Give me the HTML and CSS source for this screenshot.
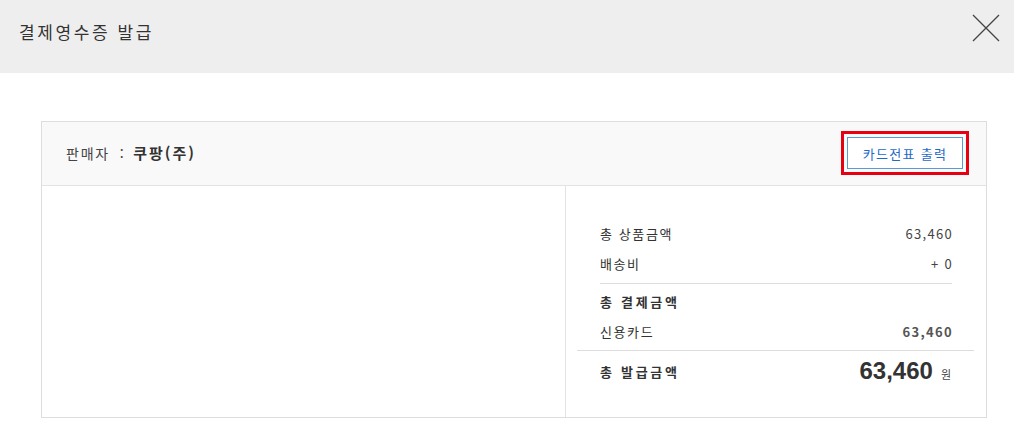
FILE: index.html
```html
<!DOCTYPE html>
<html lang="ko">
<head>
<meta charset="utf-8">
<title>결제영수증 발급</title>
<link rel="stylesheet" href="styles.css">
</head>
<body>
<header class="top">
  <h1 class="title">결제영수증 발급</h1>
  <button class="close" aria-label="닫기">
    <svg width="28" height="28" viewBox="0 0 28 28"><path d="M1 1 L27 27 M27 1 L1 27" stroke="#444" stroke-width="1.3" fill="none"/></svg>
  </button>
</header>
<main class="content">
  <section class="card">
    <div class="card-head">
      <div class="seller">판매자 <span class="colon">:</span> <b>쿠팡(주)</b></div>
      <div class="highlight"><button class="print">카드전표 출력</button></div>
    </div>
    <div class="card-body">
      <div class="left"></div>
      <div class="right">
        <div class="group first">
          <div class="row"><span>총 상품금액</span><span class="num">63,460</span></div>
          <div class="row"><span>배송비</span><span class="num">+ 0</span></div>
        </div>
        <div class="group second">
          <div class="row"><span class="strong">총 결제금액</span></div>
          <div class="row"><span>신용카드</span><span class="num bold">63,460</span></div>
        </div>
        <div class="total">
          <span class="strong">총 발급금액</span>
          <span class="amount"><span class="big">63,460</span> <span class="won">원</span></span>
        </div>
      </div>
    </div>
  </section>
</main>
</body>
</html>
```
FILE: styles.css
```css
* { box-sizing: border-box; }
body {
  margin: 0;
  background: #fff;
  font-family: "Noto Sans CJK KR", "Noto Sans", sans-serif;
  color: #333;
}
.top {
  height: 73px;
  background: #eeeeee;
  display: flex;
  align-items: center;
  justify-content: space-between;
  padding: 0 14px 0 19px;
}
.title {
  margin: 0;
  font-size: 17px;
  font-weight: 400;
  color: #333;
  letter-spacing: 2.6px;
  padding-bottom: 10px;
}
.close {
  border: 0;
  background: none;
  padding: 0;
  width: 28px;
  height: 28px;
  display: block;
  margin-bottom: 18px;
}
.close svg { display: block; }
.content {
  padding: 48px 27px 0 41px;
}
.card {
  width: 946px;
  border: 1px solid #dddddd;
}
.card-head {
  height: 64px;
  background: #f9f9f9;
  border-bottom: 1px solid #e3e3e3;
  display: flex;
  align-items: center;
  justify-content: space-between;
  padding: 0 17px 0 24px;
}
.seller {
  font-size: 14px;
  color: #444;
  letter-spacing: 1.8px;
  padding-bottom: 2px;
}
.colon { margin: 0 2px 0 4px; }
.seller b { font-weight: 700; color: #333; font-size: 15px; letter-spacing: 2px; }
.highlight {
  border: 3px solid #e60012;
  padding: 3px 3px;
  margin-top: -1px;
}
.print {
  display: block;
  height: 32px;
  width: 116px;
  background: #fff;
  border: 1px solid #5b9bd5;
  color: #1e6ac8;
  font-family: inherit;
  font-size: 13px;
  letter-spacing: 1.3px;
  padding: 0;
}
.card-body {
  display: flex;
  height: 231px;
}
.left {
  width: 524px;
  border-right: 1px solid #e3e3e3;
}
.right {
  flex: 1;
  padding-top: 32px;
}
.group {
  margin: 0 34px 0 34px;
}
.group.first {
  border-bottom: 1px solid #dddddd;
  padding-bottom: 5px;
}
.group.second {
  padding-top: 2px;
}
.row {
  height: 30px;
  display: flex;
  align-items: center;
  justify-content: space-between;
  font-size: 13px;
  color: #333;
  letter-spacing: 1.6px;
}
.strong { font-weight: 700; font-size: 13px; letter-spacing: 2.7px; }
.num { font-size: 13px; color: #444; letter-spacing: 1.3px; margin-right: -1px; }
.num.bold { font-weight: 700; color: #555; }
.total {
  margin: 4px 12px 0 11px;
  border-top: 1px solid #dddddd;
  height: 41px;
  display: flex;
  align-items: center;
  justify-content: space-between;
  padding: 0 23px 0 23px;
  font-size: 13px;
}
.amount { display: flex; align-items: baseline; }
.big {
  font-family: "Liberation Sans", Arial, sans-serif;
  font-size: 24px;
  font-weight: 700;
  color: #333;
  letter-spacing: 0;
  margin-right: 8px;
}
.won { font-size: 11px; color: #444; }
```
